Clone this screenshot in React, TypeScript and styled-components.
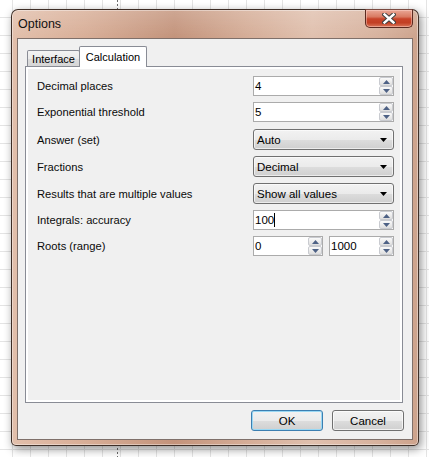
import React from 'react';
import styled, { createGlobalStyle } from 'styled-components';

const Global = createGlobalStyle`
  html, body { margin: 0; padding: 0; }
  body {
    width: 429px;
    height: 457px;
    overflow: hidden;
    font-family: "Liberation Sans", Arial, sans-serif;
    font-size: 11px;
    color: #000;
    background-color: #fff;
    background-image:
      repeating-linear-gradient(to bottom, #6a6a6a 0 2px, transparent 2px 4px),
      linear-gradient(to right, #e4e4e4 1px, transparent 1px),
      linear-gradient(to bottom, #e4e4e4 1px, transparent 1px);
    background-size: 1px 100%, 18px 18px, 18px 18px;
    background-position: 117px 0, 12px 0, 0 -1px;
    background-repeat: no-repeat, repeat, repeat;
  }
`;

const Window = styled.div`
  box-sizing: border-box;
  margin: 9px 0 0 11px;
  width: 408px;
  height: 437px;
  border: 1px solid rgba(45, 32, 26, 0.9);
  border-radius: 7px 7px 5px 5px;
  padding: 0 5px 5px 5px;
  display: flex;
  flex-direction: column;
  background:
    linear-gradient(180deg, rgba(255, 255, 255, 0.18) 0px, rgba(255, 255, 255, 0) 28px),
    linear-gradient(90deg, #e2bfab 0%, #d8ae97 18%, #c3937b 40%, #d5ad97 58%, #e0c0ae 74%, #d7b29e 90%, #cda38c 100%);
  box-shadow: inset 0 0 0 1px rgba(255, 255, 255, 0.4), 2px 3px 10px rgba(0, 0, 0, 0.45);
`;

const TitleBar = styled.div`
  height: 28px;
  display: flex;
  align-items: flex-start;
  flex: none;
`;

const Title = styled.span`
  margin-left: 1px;
  line-height: 28px;
  font-size: 12.5px;
  color: #111;
`;

const CloseButton = styled.div`
  margin-left: auto;
  margin-top: -1px;
  width: 48px;
  height: 19px;
  box-sizing: border-box;
  border: 1px solid #5b2a20;
  border-top-color: #7a4a40;
  border-radius: 0 0 5px 5px;
  background: linear-gradient(180deg, #eaa796 0%, #d97a62 40%, #c8442a 52%, #c23f24 75%, #d9765a 100%);
  box-shadow: inset 0 0 0 1px rgba(255, 220, 210, 0.45);
  display: flex;
  align-items: center;
  justify-content: center;
`;

const Client = styled.div`
  flex: 1;
  box-sizing: border-box;
  border: 1px solid #7f706a;
  background: #f0f0f0;
  padding: 7px 8px 8px 7px;
  display: flex;
  flex-direction: column;
`;

const TabStrip = styled.div`
  height: 20px;
  display: flex;
  align-items: flex-end;
  padding-left: 2px;
  flex: none;
`;

const Tab = styled.div<{ $active?: boolean }>`
  box-sizing: border-box;
  border: 1px solid #898c95;
  border-bottom: none;
  border-radius: 2px 2px 0 0;
  display: flex;
  align-items: center;
  justify-content: center;
  position: relative;
  z-index: ${(p) => (p.$active ? 2 : 1)};
  width: ${(p) => (p.$active ? '68px' : '53px')};
  height: ${(p) => (p.$active ? '21px' : '16px')};
  margin-bottom: ${(p) => (p.$active ? '-1px' : '0')};
  margin-left: ${(p) => (p.$active ? '-1px' : '0')};
  padding-bottom: ${(p) => (p.$active ? '1px' : '0')};
  padding-top: ${(p) => (p.$active ? '0' : '1px')};
  background: ${(p) =>
    p.$active ? '#ffffff' : 'linear-gradient(180deg, #f3f3f3 0%, #ebebeb 50%, #dddddd 51%, #d6d6d6 100%)'};
  font-size: 11px;
`;

const Panel = styled.div`
  box-sizing: border-box;
  width: 378px;
  height: 337px;
  border: 1px solid #898c95;
  background: #fff;
  padding: 2px;
  display: flex;
  flex: none;
`;

const Page = styled.div`
  flex: 1;
  background: #f0f0f0;
  padding: 7px 6px 0 9px;
  display: flex;
  flex-direction: column;
  gap: 6px;
`;

const Row = styled.div<{ $h: number; $mt?: number }>`
  display: grid;
  grid-template-columns: 1fr 141px;
  align-items: center;
  height: ${(p) => p.$h}px;
  margin-top: ${(p) => p.$mt ?? 0}px;
`;

const Label = styled.span`
  white-space: nowrap;
  font-size: 11.2px;
  color: #0a0a0a;
`;

const Split = styled.div`
  display: grid;
  grid-template-columns: 70px 65px;
  justify-content: space-between;
  height: 100%;
`;

const Spinner = styled.div`
  box-sizing: border-box;
  height: 100%;
  border: 1px solid #ababab;
  background: #fff;
  display: flex;
  align-items: stretch;
`;

const SpinText = styled.span`
  flex: 1;
  display: flex;
  align-items: center;
  padding-left: 1px;
  font-size: 11.5px;
`;

const Caret = styled.span`
  display: inline-block;
  width: 1px;
  height: 14px;
  background: #000;
`;

const SpinButtons = styled.div`
  width: 14px;
  display: flex;
  flex-direction: column;
`;

const SpinHalf = styled.div`
  flex: 1;
  box-sizing: border-box;
  border: 1px solid #c9cbd0;
  border-radius: 2px;
  background: linear-gradient(180deg, #fafafa 0%, #ececec 50%, #dedede 100%);
  display: flex;
  align-items: center;
  justify-content: center;
`;

const Combo = styled.div`
  box-sizing: border-box;
  height: 100%;
  border: 1px solid #707070;
  border-radius: 3px;
  background: linear-gradient(180deg, #f2f2f2 0%, #ebebeb 50%, #dddddd 51%, #cfcfcf 100%);
  box-shadow: inset 0 0 0 1px rgba(255, 255, 255, 0.6);
  display: flex;
  align-items: center;
  padding: 0 6px 0 3px;
`;

const ComboText = styled.span`
  flex: 1;
  font-size: 11.5px;
`;

const ButtonRow = styled.div`
  margin-top: 7px;
  display: flex;
  justify-content: flex-end;
  gap: 9px;
`;

const Button = styled.div<{ $default?: boolean }>`
  box-sizing: border-box;
  width: 72px;
  height: 21px;
  border: 1px solid ${(p) => (p.$default ? '#3c7fb1' : '#707070')};
  border-radius: 3px;
  background: linear-gradient(180deg, #f2f2f2 0%, #ebebeb 50%, #dddddd 51%, #cfcfcf 100%);
  box-shadow: inset 0 0 0 1px ${(p) => (p.$default ? '#9ad8f4' : 'rgba(255,255,255,0.7)')};
  display: flex;
  align-items: center;
  justify-content: center;
  font-size: 11.5px;
`;

const UpArrow = () => (
  <svg width="7" height="4" viewBox="0 0 7 4">
    <path d="M0 4 L3.5 0 L7 4 Z" fill="#4d6185" />
  </svg>
);

const DownArrow = () => (
  <svg width="7" height="4" viewBox="0 0 7 4">
    <path d="M0 0 L7 0 L3.5 4 Z" fill="#4d6185" />
  </svg>
);

const ComboArrow = () => (
  <svg width="7" height="4" viewBox="0 0 7 4">
    <path d="M0 0 L7 0 L3.5 4 Z" fill="#000" />
  </svg>
);

const CloseGlyph = () => (
  <svg width="14" height="11" viewBox="0 0 14 11">
    <path d="M2.5 1.5 L11.5 9.5 M11.5 1.5 L2.5 9.5" stroke="#3f3f3f" strokeWidth="4.4" strokeLinecap="square" />
    <path d="M2.5 1.5 L11.5 9.5 M11.5 1.5 L2.5 9.5" stroke="#ffffff" strokeWidth="2.4" strokeLinecap="square" />
  </svg>
);

const NumericUpDown: React.FC<{ value: string; caret?: boolean }> = ({ value, caret }) => (
  <Spinner>
    <SpinText>
      {value}
      {caret && <Caret />}
    </SpinText>
    <SpinButtons>
      <SpinHalf>
        <UpArrow />
      </SpinHalf>
      <SpinHalf>
        <DownArrow />
      </SpinHalf>
    </SpinButtons>
  </Spinner>
);

const Dropdown: React.FC<{ value: string }> = ({ value }) => (
  <Combo>
    <ComboText>{value}</ComboText>
    <ComboArrow />
  </Combo>
);

export default function App() {
  return (
    <>
      <Global />
      <Window>
        <TitleBar>
          <Title>Options</Title>
          <CloseButton>
            <CloseGlyph />
          </CloseButton>
        </TitleBar>
        <Client>
          <TabStrip>
            <Tab>Interface</Tab>
            <Tab $active>Calculation</Tab>
          </TabStrip>
          <Panel>
            <Page>
              <Row $h={20}>
                <Label>Decimal places</Label>
                <NumericUpDown value="4" />
              </Row>
              <Row $h={20}>
                <Label>Exponential threshold</Label>
                <NumericUpDown value="5" />
              </Row>
              <Row $h={21} $mt={1}>
                <Label>Answer (set)</Label>
                <Dropdown value="Auto" />
              </Row>
              <Row $h={21}>
                <Label>Fractions</Label>
                <Dropdown value="Decimal" />
              </Row>
              <Row $h={21}>
                <Label>Results that are multiple values</Label>
                <Dropdown value="Show all values" />
              </Row>
              <Row $h={20}>
                <Label>Integrals: accuracy</Label>
                <NumericUpDown value="100" caret />
              </Row>
              <Row $h={20}>
                <Label>Roots (range)</Label>
                <Split>
                  <NumericUpDown value="0" />
                  <NumericUpDown value="1000" />
                </Split>
              </Row>
            </Page>
          </Panel>
          <ButtonRow>
            <Button $default>OK</Button>
            <Button>Cancel</Button>
          </ButtonRow>
        </Client>
      </Window>
    </>
  );
}
